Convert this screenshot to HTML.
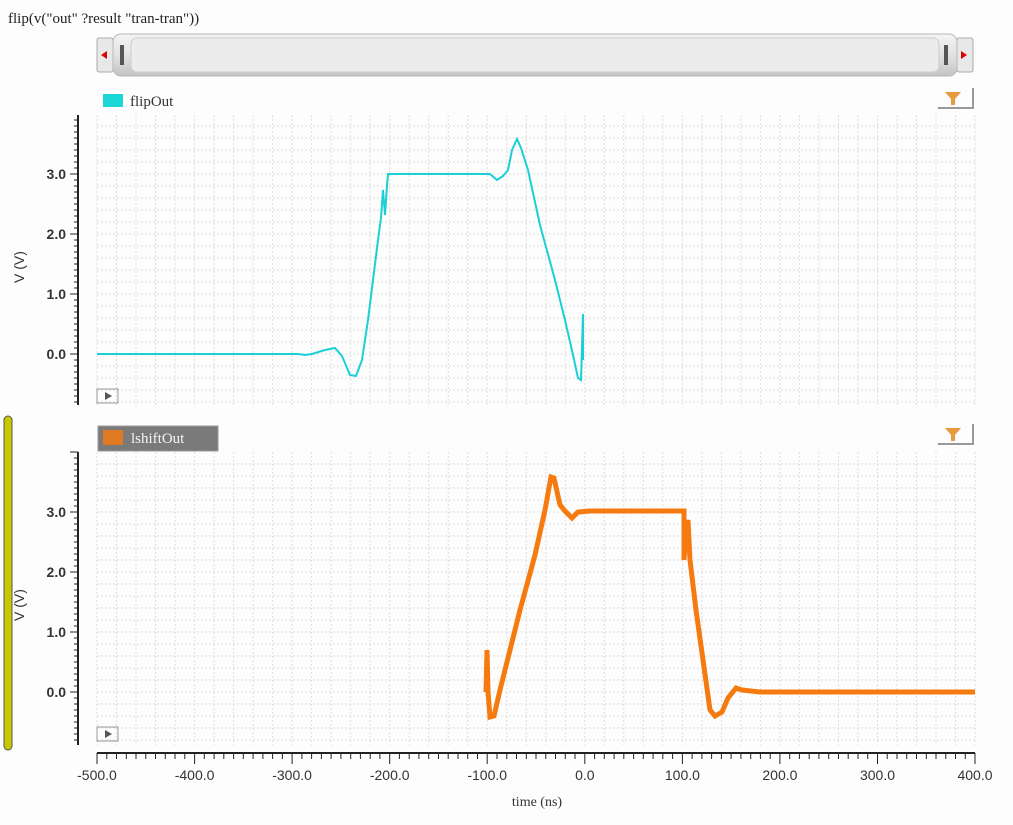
<!DOCTYPE html><html><head><meta charset="utf-8"><style>
body{margin:0;background:#fdfdfd;width:1013px;height:825px;overflow:hidden}
svg{display:block}
</style></head><body>
<svg id="s" width="1013" height="825" xmlns="http://www.w3.org/2000/svg" font-family="Liberation Serif, serif">
<defs>
<linearGradient id="bar" x1="0" y1="0" x2="0" y2="1"><stop offset="0" stop-color="#f4f4f4"/><stop offset="0.5" stop-color="#e2e2e2"/><stop offset="1" stop-color="#c4c4c4"/></linearGradient>
</defs>
<text x="8" y="23" font-size="15" fill="#222">flip(v("out" ?result "tran-tran"))</text>
<rect x="97" y="38" width="16" height="34" rx="2" fill="#e8e8e8" stroke="#aaa"/>
<polygon points="101,55 107,51 107,59" fill="#d00"/>
<rect x="957" y="38" width="16" height="34" rx="2" fill="#e8e8e8" stroke="#aaa"/>
<polygon points="967,55 961,51 961,59" fill="#d00"/>
<rect x="113" y="34" width="844" height="42" rx="8" fill="url(#bar)" stroke="#b8b8b8"/>
<rect x="131" y="38" width="808" height="34" rx="6" fill="#ececec" stroke="#ccc"/>
<rect x="120" y="45" width="4" height="20" fill="#555"/>
<rect x="944" y="45" width="4" height="20" fill="#555"/>
<rect x="103" y="94" width="20" height="13" fill="#1dd6d6"/>
<text x="130" y="106" font-size="15" fill="#333">flipOut</text>
<rect x="98" y="426" width="120" height="25" fill="#7a7a7a" stroke="#999"/>
<rect x="103" y="430" width="20" height="15" fill="#e07a20"/>
<text x="131" y="443" font-size="15" fill="#f4f4f4">lshiftOut</text>
<rect x="4" y="416" width="8" height="334" rx="4" fill="#c8c800" stroke="#555"/>
<g id="g"></g>
<polyline fill="none" stroke="#1ad0d6" stroke-width="2" points="97,354 298,354 305,355 312,354 325,350 335,348 342,356 350,375 356,376 362,360 368,320 373,280 378,240 381,218 383,190 385,215 387,186 388,174 490,174 497,180 503,176 508,170 512,150 517,139 521,148 528,170 540,225 555,280 565,320 573,355 578,378 581,380 583,314 583,360"/>
<polyline fill="none" stroke="#f57a10" stroke-width="5" points="486,692 487,650 488,692 490,717 494,716 500,690 510,650 520,610 535,555 545,510 551,477 554,478 560,505 566,512 572,518 578,512 590,511 684,511 684,560 686,530 688,520 690,560 696,610 703,660 710,710 715,716 722,712 728,698 736,688 742,690 760,692 975,692"/>
<g fill="none" stroke="#999"><rect x="97" y="389" width="21" height="14"/><rect x="97" y="727" width="21" height="14"/></g>
<polygon points="105,392 105,400 112,396" fill="#555"/>
<polygon points="105,730 105,738 112,734" fill="#555"/>
<g><polygon points="945,92 961,92 955,99 955,105 951,105 951,99" fill="#e79a40"/><path d="M938,108H973V88" stroke="#999" stroke-width="2" fill="none"/></g>
<g><polygon points="945,428 961,428 955,435 955,441 951,441 951,435" fill="#e79a40"/><path d="M938,444H973V424" stroke="#999" stroke-width="2" fill="none"/></g>
<text x="20" y="263" font-size="14" fill="#333" transform="rotate(-90 24 263)" text-anchor="middle" font-family="Liberation Sans, sans-serif">V (V)</text>
<text x="20" y="601" font-size="14" fill="#333" transform="rotate(-90 24 601)" text-anchor="middle" font-family="Liberation Sans, sans-serif">V (V)</text>
<text x="537" y="806" font-size="14" fill="#333" text-anchor="middle">time (ns)</text>
</svg>
<script>
var g=document.getElementById('g'),h='';
function X(t){return 97+(t+500)*0.9756}
function panel(top,bot,y0){
 for(var t=-500;t<=400;t+=20){var x=X(t).toFixed(1);h+='<line x1="'+x+'" y1="'+top+'" x2="'+x+'" y2="'+bot+'" stroke="#ddd" stroke-dasharray="2,2"/>';}
 for(var v=-0.8;v<=4.2;v+=0.2){var y=y0-v*60;if(y<top||y>bot)continue;h+='<line x1="97" y1="'+y.toFixed(1)+'" x2="975" y2="'+y.toFixed(1)+'" stroke="#ddd" stroke-dasharray="2,2"/>';}
 h+='<line x1="78" y1="'+top+'" x2="78" y2="'+bot+'" stroke="#222" stroke-width="2"/>';
 for(var i=-10;i<=45;i++){var y=y0-i*6;if(y<top||y>bot)continue;var maj=i%10==0;h+='<line x1="'+(maj?70:74)+'" y1="'+y+'" x2="78" y2="'+y+'" stroke="#222"/>';
  if(maj&&i>=0&&i<=30)h+='<text x="66" y="'+(y+5)+'" font-size="14" font-weight="bold" fill="#333" text-anchor="end" font-family="Liberation Sans, sans-serif">'+(i/10).toFixed(1)+'</text>';}
}
panel(115,405,354);panel(452,745,692);
h+='<line x1="97" y1="753" x2="975" y2="753" stroke="#222" stroke-width="2"/>';
for(var t=-500;t<=400;t+=10){var x=X(t).toFixed(1),maj=t%100==0;h+='<line x1="'+x+'" y1="753" x2="'+x+'" y2="'+(maj?764:759)+'" stroke="#222"/>';
 if(maj)h+='<text x="'+x+'" y="780" font-size="14" fill="#333" text-anchor="middle" font-family="Liberation Sans, sans-serif">'+t.toFixed(1)+'</text>';}
g.innerHTML=h;
</script>
</body></html>
